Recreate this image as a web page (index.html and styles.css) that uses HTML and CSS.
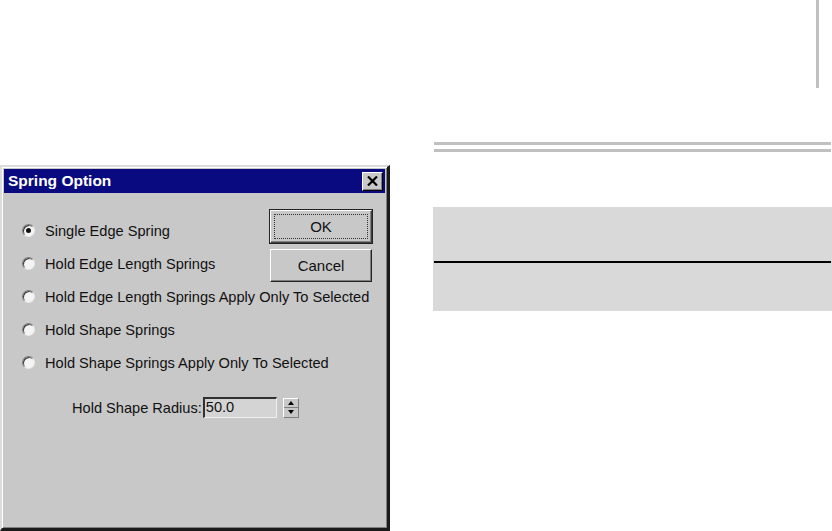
FILE: index.html
```html
<!DOCTYPE html>
<html>
<head>
<meta charset="utf-8">
<link rel="stylesheet" href="styles.css">
</head>
<body>
<div class="page">
  <div class="top">
    <div class="vline"></div>
  </div>
  <div class="main">
    <div class="left">
      <div class="dialog">
        <div class="titlebar">
          <span class="title">Spring Option</span>
          <span class="close"><svg width="11" height="10" viewBox="0 0 11 10"><path d="M1 0.5 L10 9.5 M10 0.5 L1 9.5" stroke="#000" stroke-width="2.2" fill="none"/></svg></span>
        </div>
        <div class="body">
          <div class="options">
            <div class="opt"><span class="radio on"></span><span>Single Edge Spring</span></div>
            <div class="opt"><span class="radio"></span><span>Hold Edge Length Springs</span></div>
            <div class="opt"><span class="radio"></span><span>Hold Edge Length Springs Apply Only To Selected</span></div>
            <div class="opt"><span class="radio"></span><span>Hold Shape Springs</span></div>
            <div class="opt"><span class="radio"></span><span>Hold Shape Springs Apply Only To Selected</span></div>
          </div>
          <div class="buttons">
            <div class="btn default"><span class="focus">OK</span></div>
            <div class="btn">Cancel</div>
          </div>
          <div class="radius">
            <span class="rlabel">Hold Shape Radius:</span>
            <span class="field">50.0</span>
            <span class="spinner"><span class="up"></span><span class="dn"></span></span>
          </div>
        </div>
      </div>
    </div>
    <div class="right">
      <div class="rule"></div>
      <div class="rule second"></div>
      <div class="band">
        <div class="band-line"></div>
      </div>
    </div>
  </div>
</div>
</body>
</html>
```
FILE: styles.css
```css
* { box-sizing: border-box; }
html, body { margin: 0; padding: 0; background: #fff; }
body { font-family: "Liberation Sans", Arial, sans-serif; color: #111; }
.page { width: 832px; height: 531px; overflow: hidden; display: flex; flex-direction: column; }
.top { height: 130px; display: flex; justify-content: flex-end; }
.vline { width: 3px; height: 88px; background: #c0c0c0; margin-right: 13px; }
.main { display: flex; flex: 1; }
.left { width: 390px; padding-top: 35px; }
.dialog {
  width: 390px; height: 366px;
  background: #c8c8c8;
  border-top: 2px solid #dcdcdc;
  border-left: 2px solid #dcdcdc;
  border-right: 3px solid #1a1a1a;
  border-bottom: 3px solid #1a1a1a;
  box-shadow: inset 1px 1px 0 #fff, inset -1px -1px 0 #808080;
  padding: 2px 2px 0 2px;
  display: flex; flex-direction: column;
}
.titlebar {
  height: 24px; background: #0a0a80;
  display: flex; align-items: center; justify-content: space-between;
  padding: 0 2px 0 4px;
}
.title { color: #fff; font-weight: bold; font-size: 15.5px; }
.close {
  width: 21px; height: 19px; background: #c8c8c8;
  border-top: 1px solid #fff; border-left: 1px solid #fff;
  border-right: 1px solid #000; border-bottom: 1px solid #000;
  box-shadow: inset -1px -1px 0 #808080;
  display: flex; align-items: center; justify-content: center; padding-bottom: 1px;
}
.close svg { display: block; }
.body { position: relative; flex: 1; padding: 21px 0 0 18px; display: flex; flex-direction: column; }
.options { display: flex; flex-direction: column; }
.opt { height: 33px; display: flex; align-items: center; gap: 10px; font-size: 14.6px; white-space: nowrap; }
.radio {
  width: 13px; height: 13px; border-radius: 50%;
  background: #f4f4f4;
  border: 1px solid; border-color: #7a7a7a #e8e8e8 #e8e8e8 #7a7a7a;
  box-shadow: inset 1px 1px 0 #3a3a3a;
  display: flex; align-items: center; justify-content: center; flex-shrink: 0;
}
.radio.on::after { content: ""; width: 5px; height: 5px; border-radius: 50%; background: #111; }
.buttons { position: absolute; left: 266px; top: 17px; display: flex; flex-direction: column; gap: 6px; }
.btn {
  width: 102px; height: 33px; background: #c8c8c8;
  border-top: 1px solid #fff; border-left: 1px solid #fff;
  border-right: 1px solid #222; border-bottom: 1px solid #222;
  box-shadow: inset -1px -1px 0 #808080;
  font-size: 15px; display: flex; align-items: center; justify-content: center;
}
.btn.default { outline: 1px solid #222; outline-offset: 0; border-color: #fff #404040 #404040 #fff; }
.focus { width: 94px; height: 25px; border: 1px dotted #333; display: flex; align-items: center; justify-content: center; }
.radius { display: flex; align-items: center; margin-top: 18px; padding-left: 50px; font-size: 14.6px; }
.rlabel { margin-right: 1px; }
.field {
  width: 74px; height: 21px; background: #d4d4d4;
  border-top: 2px solid #303030; border-left: 2px solid #303030;
  border-right: 1px solid #f0f0f0; border-bottom: 1px solid #f0f0f0;
  font-size: 14.6px; line-height: 17px; padding-left: 1px;
}
.spinner { width: 16px; height: 20px; margin-left: 6px; display: flex; flex-direction: column; border-right: 1px solid #808080; border-bottom: 1px solid #808080; border-top: 1px solid #fff; border-left: 1px solid #fff; }
.spinner .up, .spinner .dn { flex: 1; display: flex; align-items: center; justify-content: center; }
.spinner .up::after { content: ""; border-left: 3px solid transparent; border-right: 3px solid transparent; border-bottom: 4px solid #000; }
.spinner .dn::after { content: ""; border-left: 3px solid transparent; border-right: 3px solid transparent; border-top: 4px solid #000; }
.spinner .up { border-bottom: 1px solid #808080; }
.right { flex: 1; margin-left: 43px; padding-top: 12px; display: flex; flex-direction: column; }
.rule { height: 3px; background: #c0c0c0; margin-left: 1px; margin-right: 1px; }
.rule.second { margin-top: 4px; }
.band { margin-top: 55px; height: 104px; background: #d9d9d9; padding-top: 54px; }
.band-line { height: 2px; background: #000; margin-left: 1px; margin-right: 1px; }
```
